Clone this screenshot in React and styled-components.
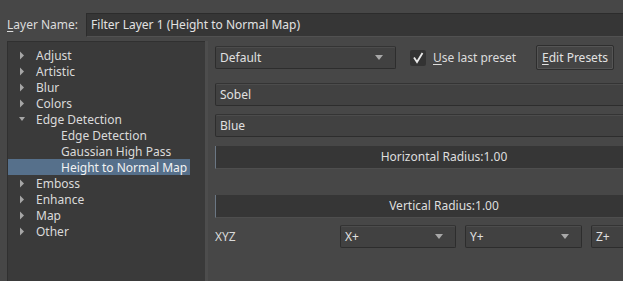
import React from 'react';
import styled, { createGlobalStyle } from 'styled-components';

const GlobalStyle = createGlobalStyle`
  html, body {
    margin: 0;
    padding: 0;
    background: #474747;
  }
  body {
    font-family: 'Noto Sans', 'Open Sans', sans-serif;
    font-size: 12px;
    color: #dedede;
  }
`;

const Window = styled.div`
  width: 623px;
  height: 281px;
  background: #474747;
  overflow: hidden;
  display: flex;
  flex-direction: column;
`;

const TopBar = styled.div`
  display: flex;
  align-items: center;
  height: 23px;
  margin-top: 13px;
  padding-left: 7px;
`;

const Label = styled.span`
  white-space: nowrap;
  color: #dcdcdc;
`;

const Ul = styled.span`
  text-decoration: underline;
  text-underline-offset: 2px;
`;

const NameInput = styled.div`
  flex: 1;
  margin-left: 8px;
  height: 22px;
  line-height: 22px;
  padding-left: 4px;
  background: #363636;
  border-top: 1px solid #2c2c2c;
  border-left: 1px solid #2c2c2c;
  border-bottom: 1px solid #515151;
  white-space: nowrap;
  color: #e2e2e2;
`;

const Body = styled.div`
  flex: 1;
  display: flex;
  margin-top: 5px;
`;

const Tree = styled.div`
  flex-shrink: 0;
  margin-left: 7px;
  width: 197px;
  background: #3a3a3a;
  border-top: 1px solid #303030;
  border-left: 1px solid #303030;
  padding-top: 5px;
`;

const Splitter = styled.div`
  flex-shrink: 0;
  width: 3px;
  background: #4d4d4d;
`;

const Row = styled.div`
  display: flex;
  align-items: center;
  height: 16px;
  width: 182px;
  padding-left: ${p => (p.$child ? 53 : 11)}px;
  box-sizing: border-box;
  background: ${p => (p.$selected ? '#56708b' : 'transparent')};
  color: ${p => (p.$selected ? '#f2f2f2' : '#dadada')};
  white-space: nowrap;
`;

const Arrow = styled.span`
  width: 17px;
  display: flex;
  align-items: center;
`;

const Panel = styled.div`
  width: 457px;
  flex-shrink: 0;
  padding: 4px 0 0 7px;
  display: flex;
  flex-direction: column;
`;

const PresetRow = styled.div`
  display: flex;
  align-items: center;
  height: 25px;
`;

const Combo = styled.div`
  position: relative;
  box-sizing: border-box;
  width: ${p => p.$w || '100%'};
  height: 23px;
  line-height: 21px;
  padding-left: 4px;
  background: #414141;
  border: 1px solid #2d2d2d;
  border-top-color: #343434;
  box-shadow: inset 0 1px 0 #4c4c4c;
  border-radius: 2px;
  margin-top: ${p => p.$mt || 0}px;
  white-space: nowrap;
  flex-shrink: 0;
  color: #e0e0e0;
`;

const Caret = styled.span`
  position: absolute;
  right: 12px;
  top: 8px;
  width: 0;
  height: 0;
  border-left: 4px solid transparent;
  border-right: 4px solid transparent;
  border-top: 5px solid #a8a8a8;
`;

const Check = styled.div`
  display: flex;
  align-items: center;
  flex-shrink: 0;
  width: 112px;
  margin-left: 14px;
  gap: 7px;
`;

const Box = styled.div`
  width: 16px;
  height: 16px;
  background: #333333;
  border-radius: 2px;
  display: flex;
  align-items: center;
  justify-content: center;
`;

const Button = styled.div`
  flex-shrink: 0;
  margin-left: 14px;
  box-sizing: border-box;
  width: 78px;
  height: 25px;
  line-height: 23px;
  text-align: center;
  background: #444444;
  border: 1px solid #2e2e2e;
  box-shadow: inset 0 0 0 1px #555555;
  border-radius: 2px;
  color: #e2e2e2;
  white-space: nowrap;
`;

const Slider = styled.div`
  box-sizing: border-box;
  height: 23px;
  line-height: 22px;
  margin-top: ${p => p.$mt}px;
  text-align: center;
  background: #363636;
  border-left: 1px solid #6b7784;
  border-bottom: 1px solid #4e4e4e;
  color: #dedede;
`;

const AxisRow = styled.div`
  display: flex;
  align-items: center;
  margin-top: 7px;
  gap: 9px;
`;

const AxisLabel = styled.span`
  width: 116px;
  flex-shrink: 0;
  color: #dadada;
`;

const tree = [
  { name: 'Adjust' },
  { name: 'Artistic' },
  { name: 'Blur' },
  { name: 'Colors' },
  { name: 'Edge Detection', open: true },
  { name: 'Edge Detection', child: true },
  { name: 'Gaussian High Pass', child: true },
  { name: 'Height to Normal Map', child: true, selected: true },
  { name: 'Emboss' },
  { name: 'Enhance' },
  { name: 'Map' },
  { name: 'Other' },
];

const TreeArrow = ({ open }) => (
  <svg width="6" height="9" viewBox="0 0 6 9">
    {open ? (
      <path d="M0 2 L6 2 L3 6 Z" fill="#a6a6a6" />
    ) : (
      <path d="M1 0.5 L5 4.5 L1 8.5 Z" fill="#a6a6a6" />
    )}
  </svg>
);

export default function App() {
  return (
    <Window>
      <GlobalStyle />
      <TopBar>
        <Label>
          <Ul>L</Ul>ayer Name:
        </Label>
        <NameInput>Filter Layer 1 (Height to Normal Map)</NameInput>
      </TopBar>
      <Body>
        <Tree>
          {tree.map((t, i) => (
            <Row key={i} $child={t.child} $selected={t.selected}>
              {!t.child && (
                <Arrow>
                  <TreeArrow open={t.open} />
                </Arrow>
              )}
              {t.name}
            </Row>
          ))}
        </Tree>
        <Splitter />
        <Panel>
          <PresetRow>
            <Combo $w="181px">
              Default
              <Caret />
            </Combo>
            <Check>
              <Box>
                <svg width="12" height="12" viewBox="0 0 12 12">
                  <path d="M2 5.5 L5 10 L10.5 1" stroke="#e8e8e8" strokeWidth="1.8" fill="none" />
                </svg>
              </Box>
              <Label>
                <Ul>U</Ul>se last preset
              </Label>
            </Check>
            <Button>
              <Ul>E</Ul>dit Presets
            </Button>
          </PresetRow>
          <Combo $mt={13}>Sobel</Combo>
          <Combo $mt={8}>Blue</Combo>
          <Slider $mt={9}>Horizontal Radius:1.00</Slider>
          <Slider $mt={26}>Vertical Radius:1.00</Slider>
          <AxisRow>
            <AxisLabel>XYZ</AxisLabel>
            <Combo $w="116px">
              X+
              <Caret />
            </Combo>
            <Combo $w="117px">
              Y+
              <Caret />
            </Combo>
            <Combo $w="117px">
              Z+
              <Caret />
            </Combo>
          </AxisRow>
        </Panel>
      </Body>
    </Window>
  );
}
